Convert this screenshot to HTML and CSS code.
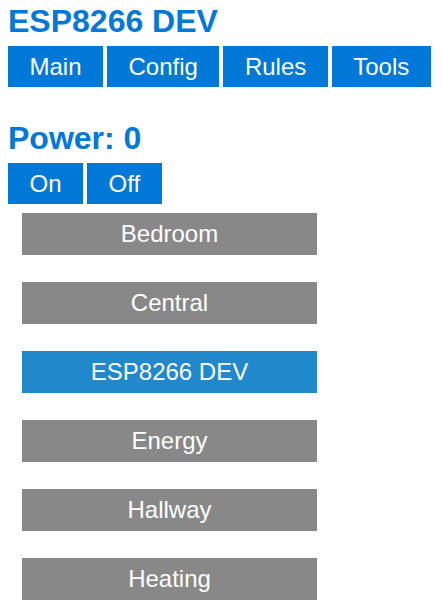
FILE: index.html
```html
<!DOCTYPE html>
<html>
<head>
<meta charset="utf-8">
<link rel="stylesheet" href="styles.css">
</head>
<body>
<h1 class="title">ESP8266 DEV</h1>
<nav class="nav">
  <a class="btn">Main</a>
  <a class="btn">Config</a>
  <a class="btn">Rules</a>
  <a class="btn">Tools</a>
</nav>
<h2 class="title power">Power: 0</h2>
<div class="nav">
  <a class="btn">On</a>
  <a class="btn">Off</a>
</div>
<ul class="rooms">
  <li class="room">Bedroom</li>
  <li class="room">Central</li>
  <li class="room active">ESP8266 DEV</li>
  <li class="room">Energy</li>
  <li class="room">Hallway</li>
  <li class="room">Heating</li>
</ul>
</body>
</html>
```
FILE: styles.css
```css
html, body {
  margin: 0;
  padding: 0;
  background: #fff;
}
body {
  padding: 3px 8px 0 8px;
  font-family: "Liberation Sans", Arial, sans-serif;
}
.title {
  margin: 0;
  font-size: 32px;
  line-height: 37px;
  font-weight: bold;
  color: #0078d7;
}
.power {
  margin-top: 33px;
}
.nav {
  display: flex;
  gap: 4px;
  margin-top: 6px;
}
.btn {
  display: block;
  height: 41px;
  line-height: 41px;
  padding: 0 21.5px;
  background: #0078d7;
  color: #fff;
  font-size: 24px;
  text-decoration: none;
}
.rooms {
  list-style: none;
  margin: 9px 0 0 14px;
  padding: 0;
  display: flex;
  flex-direction: column;
  gap: 27px;
  width: 295px;
}
.room {
  height: 42px;
  line-height: 42px;
  background: #888888;
  color: #fff;
  font-size: 24px;
  text-align: center;
}
.room.active {
  background: #2288cc;
}
```
